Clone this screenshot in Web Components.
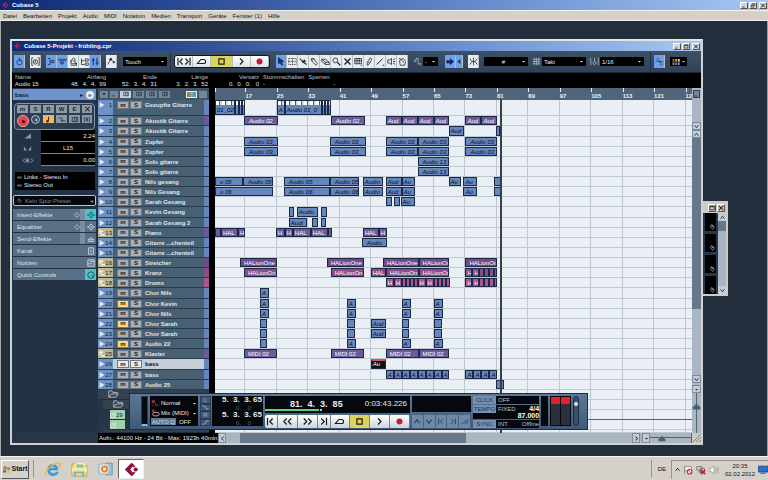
<!DOCTYPE html>
<html lang="de">
<head>
<meta charset="utf-8">
<title>Cubase 5</title>
<style>
html,body{margin:0;height:100%}
body{font:6px/8px "Liberation Sans",Arial,sans-serif;background:#222e3c;color:#111;overflow:hidden}
</style>
</head>
<body>
<cubase-desktop></cubase-desktop>
<script>
const RESET = `*{box-sizing:border-box}
:host{display:block;box-sizing:border-box;min-width:0}
button,select,input{font:inherit;color:inherit;margin:0;padding:0;border:0;background:none;border-radius:0;min-width:0}
button{display:flex;align-items:center;justify-content:center;white-space:nowrap}
select{appearance:none}
ul,dl,dd,dt{margin:0;padding:0;list-style:none}`;

function define(name, css, html) {
  customElements.define(name, class extends HTMLElement {
    connectedCallback() {
      if (this.shadowRoot) return;
      const root = this.attachShadow({mode: 'open'});
      const t = document.createElement('template');
      t.innerHTML = `<style>${RESET}${css}</style>` + (typeof html === 'function' ? html(this) : html);
      root.append(t.content.cloneNode(true));
    }
  });
}

/* Icons: [viewBox, body]; strokes use the current colour */
const ICONS = {
  logo: ['0 0 16 16', '<path d="M1 8 8 1l3 2-4 4v2l4 4-3 2z" fill="#c8204c" stroke="none"/><circle cx="12" cy="8" r="2.5" fill="#c8204c" stroke="none"/>'],
  min: ['0 0 8 8', '<path d="M1 6.5h4"/>'],
  max: ['0 0 8 8', '<path d="M1 1.5h6v5H1zM1 2.3h6"/>'],
  restore: ['0 0 8 8', '<path d="M3 3V1h4v3H5M1 3.5h4v3H1z"/>'],
  close: ['0 0 8 8', '<path d="M1 1l6 6M7 1 1 7" stroke-width="1.4"/>'],
  power: ['0 0 12 12', '<circle cx="6" cy="7" r="3.5"/><path d="M6 1v5"/>'],
  rec0: ['0 0 12 12', '<path d="M3 1H1v10h2M9 1h2v10H9"/><circle cx="6" cy="6.5" r="3"/><path d="M6 4.500V7H4.500"/>'],
  insp: ['0 0 12 12', '<path d="M1 2h3v8H1M7 4q3 0 3 2t-3 2zM5.500 4v4"/>'],
  info: ['0 0 12 12', '<path d="M0 3h12M1 5h10M4 7h4l-2 3zM3 7l2 3"/>'],
  over: ['0 0 12 12', '<path d="M2 11h8v-3H8V3L6 1 4 3v2H2v2h2M2 9h8M5 5h2"/>'],
  pool: ['0 0 12 12', '<path d="M2 2v8h4M2 5h4M7 2.500h4v3H7zM7 8h4v3H7z"/>'],
  mix: ['0 0 12 12', '<path d="M3 1v10M8 1v10M1 4h4M6 8h4" stroke-width="1.3"/>'],
  auto: ['0 0 12 12', '<path d="M1 10 5 3l3 3 3 1"/><circle cx="5" cy="3" r="1.300" fill="currentColor"/><circle cx="9" cy="7" r="1"/>'],
  locs: ['0 0 20 12', '<path d="M2 1v10M8 2 4.500 6 8 10M18 1v10M12 2l3.500 4L12 10" stroke-width="1.6"/>'],
  loop: ['0 0 16 12', '<path d="M4 9h7q3 0 3-3t-3-3H7L2 9h4" stroke-width="1.5"/>'],
  stop: ['0 0 12 12', '<path d="M2.500 2.500h7v7h-7z" stroke-width="1.6"/>'],
  play: ['0 0 12 12', '<path d="M4 2l4 4-4 4" stroke-width="1.6"/>'],
  rec: ['0 0 12 12', '<circle cx="6" cy="6" r="4" fill="#c41d2b" stroke="none"/>'],
  tostart: ['0 0 12 12', '<path d="M2 1v10M9 2 5 6l4 4" stroke-width="1.6"/>'],
  toend: ['0 0 12 12', '<path d="M10 1v10M3 2l4 4-4 4" stroke-width="1.6"/>'],
  rew: ['0 0 14 12', '<path d="M6 2 2 6l4 4M12 2 8 6l4 4" stroke-width="1.6"/>'],
  ffwd: ['0 0 14 12', '<path d="M2 2l4 4-4 4M8 2l4 4-4 4" stroke-width="1.6"/>'],
  arrow: ['0 0 12 12', '<path d="M2 1v8l2.500-2L6 11l1.500-1L6 6.500 9 6z" fill="currentColor"/><path d="M9 11h2"/>'],
  range: ['0 0 12 12', '<path d="M1 2h10v8H1zM6 2v8M1 6h10" stroke-dasharray="1.500 1"/>'],
  split: ['0 0 12 12', '<path d="M1 2l4 4 5 4M4 7l4-3M6 8l3-3" stroke-width="1.4"/>'],
  glue: ['0 0 12 12', '<path d="M2 2l3 0 5 7-2 2-6-6zM5 2 3 5"/>'],
  erase: ['0 0 12 12', '<path d="M1 3h5l5 4v3H6L1 6zM1 3l5 4h5M6 7v3"/>'],
  zoom: ['0 0 12 12', '<circle cx="4.500" cy="4.500" r="3.200"/><path d="M7 7l4 4" stroke-width="1.5"/>'],
  mute: ['0 0 12 12', '<path d="M2 2l8 8M10 2 2 10" stroke-width="1.700"/>'],
  warp: ['0 0 12 12', '<path d="M1 2h9v7H1zM4 2v7M7 2v7M1 5h9M9 11h2"/>'],
  draw: ['0 0 12 12', '<path d="M3 11V7l4-6 2 1.500L6 9zM4 7l2 1"/>'],
  line: ['0 0 12 12', '<path d="M1 10 9 2M9 11h2" stroke-width="1.300"/>'],
  speaker: ['0 0 12 12', '<path d="M1 4h2l3-2v8L3 8H1zM8 4l3-2M8 6h3M8 8l3 2"/>'],
  color: ['0 0 12 12', '<path d="M2 5l5-3 3 4-1 5H3zM1 2l4 1M5 5l3 2"/>'],
  jump: ['0 0 12 12', '<path d="M1 6h3V2h3v7h4M4 3 2 5M8 9l2 2"/>'],
  scroll: ['0 0 12 12', '<path d="M1 5h4v3H1zM6 2v8M6 3l4 3-4 4z" fill="currentColor"/>'],
  tri: ['0 0 6 12', '<path d="M4.500 3v6L1.500 6z" fill="currentColor"/>'],
  snap: ['0 0 12 12', '<path d="M1 2l3 4-3 4M11 2 8 6l3 4M6 1v10M4 6h4"/>'],
  hash: ['0 0 12 12', '<path d="M3 1v10M6 1v10M9 1v10M1 3h10M1 6h10M1 9h10"/>'],
  quant: ['0 0 12 12', '<path d="M1 1v10M11 1v10M6 1v5"/><circle cx="6" cy="8" r="2"/>'],
  zero: ['0 0 12 12', '<path d="M1 2l10 8M4 1l4 10M1 6h10" stroke-dasharray="2 1"/>'],
  pal: ['0 0 12 9', '<g stroke="none"><path fill="#c94b4b" d="M0 0h3v4H0z"/><path fill="#e2923f" d="M4 0h3v4H4z"/><path fill="#dccb4e" d="M8 0h3v4H8z"/><path fill="#5aa05a" d="M0 5h3v4H0z"/><path fill="#4f7fc4" d="M4 5h3v4H4z"/><path fill="#a66fc0" d="M8 5h3v4H8z"/></g>'],
  down: ['0 0 8 8', '<path d="M1.500 3h5L4 5.500z" fill="currentColor" stroke="none"/>'],
  wave: ['0 0 10 10', '<path d="M1 0l8 5-8 5z" fill="#dfe9f8" stroke="none"/>'],
  midi: ['0 0 10 10', '<path d="M0 2h7M0 5h5M3 8h7" stroke="#fff" stroke-width="2"/>'],
  folder: ['0 0 14 10', '<path d="M1 9V1h4l1 2h6v2M1 9l3-4h9l-3 4z"/>'],
  keys: ['0 0 10 10', '<path d="M1 1v8h8V1M4 1v5M7 1v5" stroke="#eef6ee"/>'],
  fader: ['0 0 12 10', '<path d="M0 9h11V1z" fill="#7f99ae" stroke="none"/>'],
  pan: ['0 0 12 10', '<path d="M0 2v7h5zM12 2v7H7z" fill="#7f99ae" stroke="none"/>'],
  delay: ['0 0 14 10', '<path d="M3 2 0 5l3 3M11 2l3 3-3 3M9 3H5v4h4M5 5h3" stroke="#9cb2c6" stroke-width="1.3"/>'],
  io: ['0 0 10 8', '<path d="M0 4h4M3 1l3 3-3 3M8 1v6"/>'],
  dia: ['0 0 10 10', '<path d="M5 1l4 4-4 4-4-4z"/>'],
  diaf: ['0 0 10 10', '<path d="M5 1l3 4-3 4-3-4zM0 5h2M8 5h2M5 4v2"/>'],
  send: ['0 0 10 10', '<path d="M1 8h8M2 6q3-5 6 0M1 6h8"/>'],
  chan: ['0 0 10 10', '<path d="M2 1h6v8H2zM5 3v4"/>'],
  note: ['0 0 10 10', '<path d="M1 1h8v8H1zM3 3h6M1 6h6"/>'],
  knob: ['0 0 10 10', '<circle cx="5" cy="5" r="4"/><path d="M5 5l3 3"/>'],
  clef: ['0 0 10 10', '<path d="M5 1v6" stroke-width="1.4"/><circle cx="3.500" cy="7.500" r="1.300" fill="currentColor"/>'],
  lane: ['0 0 10 10', '<path d="M0 3h5v4h5M3 7h3"/>'],
  lanes: ['0 0 10 10', '<path d="M1 2h8v6H1zM4 2v6M7 2v6"/>'],
  mono: ['0 0 10 10', '<path d="M2 1Q0 5 2 9M8 1q2 4 0 8M5 2v6M4 3v4M6 3v4"/>'],
  up: ['0 0 8 8', '<path d="M1 6l3-4 3 4" stroke-width="1.400"/>'],
  dn: ['0 0 8 8', '<path d="M1 2l3 4 3-4" stroke-width="1.400"/>'],
  lf: ['0 0 8 8', '<path d="M6 1 2 4l4 3" stroke-width="1.400"/>'],
  rt: ['0 0 8 8', '<path d="M2 1l4 3-4 3" stroke-width="1.400"/>'],
  curve: ['0 0 8 6', '<path d="M0 1h2q3 0 3 4h3"/>'],
  curve2: ['0 0 8 6', '<path d="M0 5h2q3 0 3-4h3"/>'],
  mixrec: ['0 0 12 10', '<circle cx="3" cy="3" r="2" fill="#c8323c" stroke="#7c1d24"/><path d="M6 5v3h5M3 7v2" stroke="#c8323c"/>'],
  mixloop: ['0 0 12 10', '<circle cx="3" cy="2" r="1.700" fill="#c8323c" stroke="none"/><ellipse cx="6.500" cy="6.500" rx="4.500" ry="2.500" stroke="#e0a0a0" stroke-width="1.300"/>'],
  edit: ['0 0 14 8', '<path d="M0 7h5l3-5M7 4h6M7 7h6M9 1h4"/>'],
  win: ['0 0 12 12', '<g stroke="none"><path fill="#e8542c" d="M1 2q2-1.500 4.500 0L5 6Q3 5 .5 6z"/><path fill="#5aa83c" d="M6.500 2.500q2 1 4.500 0l-.5 4q-2 1-4.500 0z"/><path fill="#3f74d4" d="M.3 7q2-1 4.500 0l-.5 4q-2-1-4.500 0z"/><path fill="#f2c22c" d="M5.800 7.500q2 1 4.500 0l-.5 4q-2 1-4.500 0z"/></g>'],
  ie: ['0 0 18 18', '<path d="M14.500 9.500H5.500q.3 4 4 4 2 0 3-1.500h2.500q-1.500 4-5.700 4Q3 16 3 9.500T9 3.500q5.500 0 5.500 6zM5.700 7.700h6Q11.300 5.500 8.800 5.500T5.700 7.700z" fill="#39a3df" stroke="#1f7dbd" stroke-width=".5"/><path d="M1 16Q-1 12 6 6T17 2q1 1-1 5" stroke="#f0b62f" stroke-width="1.500"/>'],
  files: ['0 0 18 18', '<path d="M1 3h6l1 2h9v11H1z" fill="#f3d777" stroke="#cfa53c"/><path d="M5 3h9v5H5z" fill="#8fc977" stroke="#fff"/><path d="M1 7h16v5H1z" fill="#f8e7a0" stroke="none"/><path d="M4 17v-5h9v5" stroke="#6db3da" stroke-width="2"/>'],
  wmp: ['0 0 18 18', '<path d="M9 2h8v14H9z" fill="#9bc4e6" stroke="#5b8dbb"/><path d="M1 3h12v12H1z" fill="#cfe2f2" stroke="#7fa9cc"/><circle cx="8" cy="9" r="5" fill="#ee8427" stroke="#fff"/><path d="M6.500 6.500v5l4-2.500z" fill="#fff" stroke="none"/>'],
  cub: ['0 0 18 18', '<path d="M1 9 9 1l3.500 2.500L8 8v2l4.500 4.500L9 17z" fill="#8c1538" stroke="none"/><path d="M11 4l2 2M11 14l2-2" stroke="#8c1538" stroke-width="2"/><circle cx="14" cy="9" r="2.500" fill="#8c1538" stroke="none"/>'],
  flag: ['0 0 12 12', '<path d="M2 1v10M2 2h8v5H2z" fill="#fff" stroke="#888"/><circle cx="8" cy="8" r="2.800" fill="#fff" stroke="#c8323c" stroke-width="1.300"/><path d="M6 6l4 4" stroke="#c8323c"/>'],
  net: ['0 0 12 12', '<path d="M1 2h6v4H1zM4 6v3h5M5 4h5v4H5z" fill="#ddd" stroke="#666"/><path d="M6 6l5 5M11 6l-5 5" stroke="#c8202c" stroke-width="2"/>'],
  vol: ['0 0 12 12', '<path d="M1 4h2l3-3v10L3 8H1z" fill="#fff" stroke="#999"/><path d="M8 3q2 3 0 6M10 2q3 4 0 8" stroke="#999"/>'],
  dtop: ['0 0 12 10', '<path d="M0 1h12v7H0z" fill="#2f6fc4" stroke="#1d4480"/><path d="M3 9.500h6" stroke="#1d4480"/>'],
  thumb: ['0 0 12 8', '<path d="M6 0l5 5v3H1V5z" fill="#4d6072" stroke="none"/>'],
  grip: ['0 0 9 9', '<path d="M1 9l8-8M4 9l5-5M7 9l2-2" stroke="#84898e"/>'],
  hist: ['0 0 10 10', '<path d="M5 1 2 4l4 5 3-4zM5 1v3h3"/>']
};
define('cb-icon', ':host{flex:none;width:9px;height:9px}svg{display:block;width:100%;height:100%;fill:none;stroke:currentColor}', el => {
  const [vb, body] = ICONS[el.getAttribute('name')];
  return `<svg viewBox="${vb}" aria-hidden="true">${body}</svg>`;
});
const ic = (n, w = 9, h = 9) => `<cb-icon name="${n}" style="width:${w}px;height:${h}px"></cb-icon>`;

/* Title bar with window buttons */
define('title-bar', `:host{display:flex;align-items:center;gap:3px;padding:0 1px 0 2px;color:#fff;font-weight:700;background:linear-gradient(90deg,#0f2a73,#2c4c96 25%,#6b8fd0 65%,#a5c8f2)}
span{flex:1;white-space:nowrap}div{display:flex;gap:1px}
button{width:8px;height:7px;background:#d8d4cc;color:#111;border:1px solid;border-color:#fff #555 #555 #fff}button:last-child{margin-left:1px}`,
  el => `${ic('logo', 7, 8)}<span><slot></slot></span><div><button aria-label="Minimieren">${ic('min', 6, 5)}</button><button aria-label="Fenstergröße">${ic(el.getAttribute('mid') || 'max', 6, 5)}</button><button aria-label="Schließen">${ic('close', 6, 5)}</button></div>`);

define('menu-bar', ':host{background:#d6d1c8;border-top:1px solid #f3f1ec;border-bottom:1px solid #efece6}nav{display:flex;height:100%;align-items:center;gap:6px;padding-left:3px}',
  '<nav>' + ['Datei', 'Bearbeiten', 'Projekt', 'Audio', 'MIDI', 'Notation', 'Medien', 'Transport', 'Geräte', 'Fenster (1)', 'Hilfe'].map(t => `<button>${t}</button>`).join('') + '</nav>');

/* Tool bar of the project window */
const tb = (n, c = '', w = 9) => `<button class="${c}" aria-label="${n}">${ic(n, w, 9)}</button>`;
const sel = (label, val, c) => `<span class="sel ${c}"><select aria-label="${label}"><option>${val}</option></select>${ic('down', 5, 5)}</span>`;
define('tool-bar', `:host{background:linear-gradient(#3d5166,#304257);display:flex;align-items:center;padding:0 2px;border-bottom:1px solid #1b2735}
.g{display:flex;height:13px;margin-right:5px;flex:none}
button{width:11px;background:#e9ecef;color:#1a1d22;border-right:1px solid #b4bcc6}
button.b{background:#6f9fec;color:#122a58}
.tr{height:13px;border:1px solid #10161d;border-radius:3px;overflow:hidden;margin-right:6px}.tr button{width:18px;background:linear-gradient(#fff,#dde1e6)}.tr .y{background:#dcd35c;width:22px}
.sel{display:flex;align-items:center;background:#000;color:#e6ebf0;height:9px;padding:0 2px;margin-right:4px;border-radius:1px}.sel select{flex:1;width:0;font-size:6px;line-height:8px}
.w1{width:44px;margin-left:1px;margin-right:3px}.w2{width:15px;margin-right:7px}.w3{width:44px}.w4{margin-right:6px}.c select{text-align:center;text-align-last:center}
.pale{color:#a9b8c8;margin-right:1px;flex:none}
i{width:1px;height:20px;background:#22303f;margin-right:3px}`,
  `<div class="g">${tb('power', 'b')}</div><div class="g">${tb('rec0')}</div><div class="g">${tb('insp', 'b')}${tb('info', 'b')}${tb('over')}${tb('pool')}${tb('mix', 'b')}</div><div class="g">${tb('auto')}</div>
${sel('Automationsmodus', 'Touch', 'w1')}<i></i><div class="g tr">${tb('locs', '', 16)}${tb('loop', '', 11)}${tb('stop', 'y')}${tb('play')}${tb('rec')}</div>
<div class="g">${tb('arrow', 'b')}${['range', 'split', 'glue', 'erase', 'zoom', 'mute', 'warp', 'draw', 'line', 'speaker', 'color'].map(n => tb(n)).join('')}</div>
<span class="pale">${ic('jump')}</span>${sel('Nudge', '-', 'w2')}<div class="g">${tb('scroll', 'b')}<button class="b" style="width:7px" aria-label="Autoscroll">${ic('tri', 4, 9)}</button></div><div class="g">${tb('snap')}</div>
${sel('Rastertyp', '#', 'w3 c')}<span class="pale">${ic('hash')}</span>${sel('Raster', 'Takt', 'w3')}<span class="pale">${ic('quant')}</span>${sel('Quantisierung', '1/16', 'w3 w4')}<i></i><div class="g">${tb('zero', 'b')}</div>
<button style="width:17px;height:9px;background:#000;color:#ccc;border:0" aria-label="Farben">${ic('pal', 9, 6)}${ic('down', 5, 5)}</button>`);

define('info-line', `:host{background:#000;color:#dfe5ea;padding:1px 3px 0}dl{display:flex}div{text-align:right;white-space:pre}div:first-child{text-align:left}dt,dd{line-height:7px}dt{color:#b9c2ca}
.a{width:36px}.b{width:55px}.c{width:51px}.l{text-align:left;margin-left:4px}`,
  '<dl>' + [['a', 'Name', 'Audio 15'], ['b', 'Anfang', '48.  4.  4.  99'], ['c', 'Ende', '52.  3.  4.  31'], ['c', 'Länge', '3.  2.  3.  52'], ['c', 'Versatz', '0.  0.  0.   0'], ['l', 'Stummschalten', '-'], ['l', 'Sperren', '               -']].map(([c, t, d]) => `<div class="${c}"><dt>${t}</dt><dd>${d}</dd></div>`).join('') + '</dl>');

/* Inspector */
define('inspector-panel', `:host{background:#233345;color:#d8e2ec;padding:1px 2px 0 1px;font-size:6px}
.h{display:flex;height:11px;align-items:center;background:#6f93cf;color:#0d1830;padding:0 2px}.h b{flex:1}.h button{width:8px;height:8px;border-radius:4px;background:#e8eef5;margin-left:3px;color:#222;line-height:6px}
.c{margin:3px 1px 0;border:1px solid #8096ab;border-radius:4px;padding:1px 2px;background:#2b3d50;display:grid;grid-template-columns:repeat(5,11px) 1fr;gap:2px;height:27px;grid-template-rows:8px 8px}
.c button{background:#8c9aa8;color:#1b232c;font-weight:700;height:8px;line-height:8px}.c .o{background:#f3b757}.c .rr{background:#e04450;border:1px solid #f2a0a4;border-radius:6px;width:12px;height:12px}.c .rr::after{content:"";width:3px;height:3px;background:#400;border-radius:2px}.c .mo{border-radius:5px;width:9px;height:9px;border:1px solid #b8c6d4;background:#3a4b5c;color:#dde;margin-left:1px}
.v{display:grid;grid-template-columns:27px 1fr;margin:0 1px;padding-bottom:6px}.v label{display:flex;align-items:center;justify-content:center;height:12px}.v input{background:#000;text-align:right;color:#e6edf3;height:12px;width:100%;border-bottom:1px solid #5d8fa0}.v .m{text-align:center}
.r{background:#000;margin:0 1px 5px 2px;padding:1px 2px}.r button{height:8px;gap:2px;color:#e2e8ee}
.p{display:flex;height:11px;width:100%;border:1px solid #b8c2cc;border-radius:2px;background:#05080c;color:#7d8a97;justify-content:flex-start;padding:0 2px;gap:3px;margin-bottom:3px}.p span{flex:1;text-align:left}
li{height:12px;padding-bottom:1px}li button{width:100%;height:11px;background:#596f85;padding-left:4px;justify-content:flex-start;gap:4px;color:#dce6ef}li:nth-child(-n+3) em{border-left:5px solid #7b8e9f}li span{flex:1;text-align:left}li em{display:flex;align-items:center;justify-content:center;width:11px;height:11px;box-sizing:content-box;margin-left:-4px}li .t{background:#4cc3cb;color:#13434a}`,
  `<div class="h"><b>bass</b>▸<button>e</button></div>
<div class="c"><button>m</button><button>S</button><button>R</button><button>W</button><button>E</button><button aria-label="Freeze">${ic('close', 7, 6)}</button><button class="rr" aria-label="Aufnahme"></button><button class="mo" aria-label="Monitor">${ic('tri', 4, 6)}</button><button class="o" aria-label="Zeitbasis">${ic('clef', 7, 7)}</button><button aria-label="Spuren">${ic('lane', 8, 7)}</button><button aria-label="Lanes">${ic('lanes', 8, 7)}</button><button aria-label="Stereo">${ic('mono', 8, 7)}</button></div>
<div class="v"><label for="vol">${ic('fader', 8, 6)}</label><input id="vol" aria-label="Lautstärke" value="2.24"><label for="pan">${ic('pan', 9, 6)}</label><input id="pan" class="m" aria-label="Panorama" value="L15"><label for="del">${ic('delay', 12, 7)}</label><input id="del" aria-label="Verzögerung" value="0.00"></div>
<div class="r"><button>${ic('io', 5, 5)}Links - Stereo In</button><button>${ic('io', 5, 5)}Stereo Out</button></div>
<button class="p">${ic('hist', 6, 6)}<span>Kein Spur-Preset</span>◂</button>
<ul>${[['Insert-Effekte', 'diaf', 1, 1], ['Equalizer', 'diaf', 0, 1], ['Send-Effekte', 'send'], ['Kanal', 'chan'], ['Notizen', 'note'], ['Quick Controls', 'knob', 1]].map(([t, n, on, d]) => `<li><button><span>${t}</span>${d ? ic('dia', 6, 6) : ''}<em class="${on ? 't' : ''}">${ic(n, 8, 8)}</em></button></li>`).join('')}</ul>`);

/* Track data: name, kind, colour, muted, clips [start, end, label, tone]; positions count from the left edge of a 478 unit view */
const B = '#6585bd', P = '#6a5c9c', V = '#704b8b', M = '#8c4c86', K = '#ae548c';
const A = (s, e, t = '', c = B) => [s - 215, e - 215, t, c];
const zup = () => [A(244, 278, 'Audio 03_'), A(330, 366, 'Audio 03_'), A(386, 418, 'Audio 03_'), A(418, 450, 'Audio 03_'), A(466, 498, 'Audio 03_')];
const run = (s, e, w, t, c) => { const r = []; for (let x = s; x < e; x += w) r.push(A(x, Math.min(e, x + w), t, c)); return r; };
const cols = (...xs) => xs.map(x => A(x, x + 9, 'A'));
const TRACKS = [
  ['Gezupfte Gitarre', 'a', B, 0, [A(215, 235, '01_02'), A(235, 239), A(239, 242), A(242, 245), A(277, 285, 'A'), A(285, 322, 'Audio 01_0'), A(322, 325), A(325, 328), A(328, 331)]],
  ['Akustik Gitarre', 'a', P, 0, [A(244, 278, 'Audio 02_', P), A(331, 365, 'Audio 02_', P), ...run(386, 450, 16, 'Aud', P), ...run(466, 498, 16, 'Aud', P)]],
  ['Akustik Gitarre', 'a', B, 0, [A(449, 465, 'Aud'), A(497, 501)]],
  ['Zupfer', 'a', B, 0, zup()],
  ['Zupfer', 'a', B, 0, zup()],
  ['Solo gitarre', 'a', B, 0, [A(418, 450, 'Audio 13_')]],
  ['Solo gitarre', 'a', B, 0, [A(418, 450, 'Audio 13_')]],
  ['Nils gesang', 'a', B, 0, [A(215, 243, 'o 05'), A(243, 273, 'Audio 05'), A(284, 330, 'Audio 05'), A(330, 359, 'Audio 05'), A(363, 383, 'Audio'), A(386, 402, 'Aud'), A(402, 415, 'Au'), A(449, 462, 'Au'), A(464, 478, 'Au'), A(495, 503)]],
  ['Nils Gesang', 'a', B, 0, [A(215, 273, 'o 06'), A(284, 330, 'Audio 06'), A(330, 359, 'Audio 06'), A(363, 383, 'Audio'), A(386, 402, 'Aud'), A(402, 415, 'Au'), A(464, 478, 'Au'), A(495, 503)]],
  ['Sarah Gesang', 'a', B, 0, [A(386, 392), A(394, 400), A(401, 415, 'Au')]],
  ['Kevin Gesang', 'a', B, 0, [A(289, 294), A(297, 318, 'Audio'), A(321, 327)]],
  ['Sarah Gesang 2', 'a', B, 0, [A(289, 307, 'Audi'), A(312, 318), A(321, 326)]],
  ['Piano', 'm', P, 0, [A(215, 221, '', P), A(221, 238, 'HAL', P), A(238, 245, 'H', P), A(276, 285, 'H', P), A(285, 293, 'H', P), A(293, 311, 'HAL', P), A(311, 328, 'HAL', P), A(328, 332, '', P), A(363, 379, 'HAL', P), A(379, 387, 'H', P)]],
  ['Gitarre ...chenteil', 'a', B, 0, [A(362, 387, 'Audio')]],
  ['Gitarre ...chenteil', 'a', B, 0, []],
  ['Streicher', 'm', V, 0, [A(240, 277, 'HALionOne', V), A(327, 364, 'HALionOne', V), A(383, 419, 'HALionOne', V), A(419, 450, 'HALionOn', V), A(466, 498, 'HALionOn', V)]],
  ['Kranz', 'm', M, 0, [A(244, 277, 'HALionOn', M), A(331, 364, 'HALionOn', M), A(371, 386, 'HAL', M), A(386, 419, 'HALionOn', M), A(419, 450, 'HALionOn', M), A(466, 473, 'H', M), A(473, 480, 'H', M), ...run(480, 498, 5, '', M)]],
  ['Drums', 'm', K, 0, [A(386, 394, 'H', K), A(394, 402, 'H', K), ...run(402, 418, 4, '', K), A(418, 426, 'H', K), A(426, 434, 'H', K), ...run(434, 450, 4, '', K), A(466, 473, 'H', K), A(473, 480, 'H', K), ...run(480, 498, 5, '', K)]],
  ['Chor Nils', 'a', B, 0, cols(260)],
  ['Chor Kevin', 'a', B, 1, cols(260, 347, 402, 434)],
  ['Chor Nils', 'a', B, 0, cols(260, 347, 402, 434)],
  ['Chor Sarah', 'a', B, 1, [A(260, 267), A(347, 355), A(371, 386, 'Aud'), A(402, 409), A(434, 442)]],
  ['Chor Sarah', 'a', B, 0, [A(260, 267), A(347, 355), A(371, 386, 'Aud'), A(402, 409), A(434, 442)]],
  ['Audio 22', 'a', B, 1, [A(260, 267), ...cols(347, 402, 434)]],
  ['Klavier', 'm', P, 0, [A(244, 277, 'MIDI 02', P), A(331, 364, 'MIDI 02', P), A(386, 419, 'MIDI 02', P), A(419, 450, 'MIDI 02', P)]],
  ['bass', 'a', B, 0, [A(371, 386, 'Au', '#111')], 1],
  ['bass', 'a', B, 0, [...run(386, 450, 8, 'A'), ...run(466, 498, 8, 'A')]],
  ['Audio 25', 'a', B, 0, [A(497, 505)]]
];
const ROWS = 'grid-template-rows:minmax(0,162fr) repeat(31,minmax(0,101fr)) minmax(0,27fr)';
const COLS = 'grid-template-columns:minmax(0,61fr) repeat(14,minmax(0,63fr)) minmax(0,13fr)';

define('track-row', `:host{display:flex;background:#486074;border-bottom:1px solid #2b3b4b;color:#dfe7ee;font-weight:700;overflow:hidden}
.n{width:15px;flex:none;display:flex;align-items:flex-start;justify-content:space-between;background:#6f92c4;color:#101c30;font-weight:400;padding:1px 1px 0;line-height:8px;margin-right:4px}
:host([kind=m]) .n{background:#bdb798}
.x{display:flex;gap:1px;flex:1;padding-top:1px}button{width:12px;height:8px;background:#a4afba;color:#10151b;line-height:7px;border:1px solid #6d7a87;font-weight:700}button.on{background:#f5dc80}
b{padding-left:2px;flex:1;white-space:nowrap}.k{width:5px;background:var(--k)}
:host([selected]) {background:#c6ced8;color:#111}:host([selected]) button{background:#e6ebf0}`,
  el => `<div class="n">${ic(el.getAttribute('kind') === 'm' ? 'midi' : 'wave', 6, 8)}<span>${el.getAttribute('num')}</span></div><div class="x"><button class="${el.hasAttribute('muted') ? 'on' : ''}">m</button><button>S</button><b>${el.getAttribute('label')}</b></div><div class="k"></div>`);

define('track-list', `:host{display:grid;grid-template-rows:12px minmax(0,1fr);background:#263647}
.top{display:flex;align-items:center;gap:2px;background:#42566a;padding:0 2px}.top button{width:8px;height:7px;background:#75869a;color:#1c2732}.top .w{width:11px;background:#c8d2dd}.top u{flex:1}.top .rgb{background:linear-gradient(90deg,#c66 33%,#6b8 33% 66%,#68d 66%);width:11px;border:1px solid #eee}
.rows{display:grid;${ROWS}}.f{display:flex;align-items:center;background:#34424f;color:#c6ced6;border-bottom:1px solid #222d38}.f1{padding-left:10px}.f2{margin-left:5px;padding-left:10px}.f3{margin:0 84px 0 12px;background:#9ecfae;color:#18301f}`,
  `<div class="top"><button aria-label="Liste">${ic('down', 6, 6)}</button><button aria-label="Reihe">${ic('min', 6, 6)}</button><button class="w" aria-label="Alle">${ic('lanes', 8, 6)}</button><button style="width:11px" aria-label="M">${ic('lanes', 8, 6)}</button><button style="width:11px" aria-label="S">${ic('lanes', 8, 6)}</button><button style="width:11px" aria-label="R">${ic('lanes', 8, 6)}</button><u></u><button class="rgb" aria-label="Farben"></button><button aria-label="Teilen"></button></div>
<div class="rows">${TRACKS.map((t, i) => `<track-row num="${i + 1}" label="${t[0]}" kind="${t[1]}" style="--k:${t[2]}" ${t[3] ? 'muted' : ''} ${t[5] ? 'selected' : ''}></track-row>`).join('')}<div class="f f1">${ic('folder', 11, 8)}</div><div class="f f2">${ic('folder', 11, 8)}</div><div class="f f3">${ic('keys', 6, 8)}29</div><div class="f f3">${ic('keys', 6, 8)}</div><div class="f f2"></div></div>`);

define('time-ruler', `:host{display:grid;${COLS};background:#50657a;color:#eef3f7;font-weight:700}
span{padding:4px 0 0;line-height:8px;background:linear-gradient(#e8eef4,#e8eef4) 0 0/1px 4px no-repeat}`,
  ['', 17, 25, 33, 41, 49, 57, 65, 73, 81, 89, 97, 105, 113, 121, 12].map(n => `<span>${n}</span>`).join(''));

define('lane-view', `:host{position:relative;display:grid;background:#eaeff5;overflow:hidden}
.grid,.lanes{grid-area:1/1;display:grid;min-height:0}.grid{${COLS}}.grid i{border-right:1px solid #bcc5ce}.grid i:last-child{border:0}.lanes{${ROWS}}
.lane{position:relative;border-bottom:1px solid #c0c8d0}.hl{border-bottom-color:#56606b}
.clip{position:absolute;top:0;bottom:0;left:calc(var(--s)/478*100%);width:calc((var(--e) - var(--s))/478*100%);background:var(--c);border:1px solid #1b2846;overflow:hidden;white-space:nowrap;color:#060c1c;font-style:italic;line-height:8px;padding-left:4px}
.clip.l{color:#fff}.clip.m{font-style:normal;padding-left:3px}.clip.n{padding-left:1px}.lane:first-child .clip{background:repeating-linear-gradient(90deg,#fff 0 3px,#555 3px 4px,#ddd 4px 6px) 0 0/100% 4px no-repeat,var(--c);padding-top:5px;padding-left:1px}
.hot{border-top:2px solid #c8566a}.clip.hot{line-height:7px}
.head{position:absolute;top:0;bottom:0;left:calc(286/478*100%);width:2px;background:#3a3f46}`,
  `<div class="grid">${'<i></i>'.repeat(16)}</div><div class="lanes">${TRACKS.map(t => `<div class="lane">${t[4].map(([s, e, l, c]) => `<span class="clip ${c === B ? '' : 'l'} ${t[1] === 'm' ? 'm' : ''} ${e - s < 22 ? 'n' : ''} ${t[5] ? 'hot' : ''}" style="--s:${s};--e:${e};--c:${c}">${l}</span>`).join('')}</div>`).join('')}<div class="lane"></div><div class="lane"></div><div class="lane hl"></div><div class="lane"></div><div class="lane"></div></div><div class="head"></div>`);

define('side-scroll', `:host{display:flex;flex-direction:column;background:#a9b5c2;color:#1c2733}button{height:8px;width:100%;background:#c3ccd6;border:1px solid #7c8996}
.t{background:#66788a}.top{height:8px;margin:2px 1px;border:1px solid #33424f;background:#75869a}`,
  `<button class="top" style="width:7px" aria-label="Optionen">${ic('min', 5, 5)}</button><div style="flex:22"></div><button aria-label="Ab">${ic('dn', 5, 5)}</button><button aria-label="Auf">${ic('up', 5, 5)}</button><div class="t" style="flex:171"></div><div style="flex:66"></div><button aria-label="Ab">${ic('dn', 5, 5)}</button><button aria-label="Zoom" style="margin-top:2px">${ic('down', 5, 5)}</button><div style="flex:40;display:flex;justify-content:center;background:linear-gradient(90deg,#a9b5c2 4px,#566 4px 5px,#a9b5c2 5px)"><cb-icon name="thumb" style="margin-top:10px;height:7px"></cb-icon></div>`);

define('status-row', `:host{display:grid;grid-template-columns:206px minmax(0,1fr);background:#263647}
p{margin:0 0 0 86px;background:#000;color:#e4e9ee;white-space:nowrap;line-height:10px;padding-left:1px}.s{display:flex;background:#a9b5c2;color:#1c2733}button{width:8px;background:#c3ccd6;border:1px solid #7c8996}.z{width:42px;display:flex;align-items:center;padding-left:8px;background:linear-gradient(#a9b5c2 4px,#566 4px 5px,#a9b5c2 5px);border-right:1px solid #566}.g{width:9px;background:#cfcac0;display:flex}`,
  `<p>Aufn.: 44100 Hz - 24 Bit - Max: 1923h 40min</p><div class="s"><button aria-label="Links">${ic('lf', 5, 5)}</button><div style="flex:14"></div><div style="flex:227;background:#66788a"></div><div style="flex:166"></div><button aria-label="Rechts">${ic('rt', 5, 5)}</button><button style="margin-left:2px" aria-label="Zoom">${ic('down', 5, 5)}</button><div class="z">${ic('thumb', 8, 7)}</div><div class="g">${ic('grip', 9, 9)}</div></div>`);

define('project-window', `:host{border:2px solid #cfd2d4;border-top-color:#e4e4e2;display:grid;grid-template-rows:10px 22px 15px minmax(0,1fr) 10px;background:#233345}
.body{display:grid;grid-template-columns:86px 111px 6px minmax(0,1fr) 9px}.body>*{min-height:0}.gap{background:#000}.view{display:grid;grid-template-rows:12px minmax(0,1fr)}`,
  `<title-bar>Cubase 5-Projekt - frühling.cpr</title-bar><tool-bar></tool-bar><info-line></info-line>
<div class="body"><inspector-panel></inspector-panel><track-list></track-list><div class="gap"></div><div class="view"><time-ruler></time-ruler><lane-view></lane-view></div><side-scroll></side-scroll></div><status-row></status-row>`);

/* Transport panel */
define('transport-panel', `:host{display:flex;gap:2px;padding:2px 8px 3px 11px;background:linear-gradient(#5d7897,#40597a);border:1px solid #1d2c40;color:#e4ebf2}
.k{background:#05080c}.vm{width:7px;border:1px solid #2a3c55;border-bottom:2px solid #5fc3f0}
.mode{width:48px;padding:2px 1px}.mode div{display:flex;align-items:center;height:10px;gap:1px}.mode select{flex:1;width:0}.mode .q{gap:3px;height:7px}.q button{background:#5f7794;color:#cfdcea;height:7px;padding:0 1px}
.lr{width:63px;display:grid;grid-template-columns:11px 1fr;grid-template-rows:repeat(4,minmax(0,1fr));gap:0 1px}.lr button{background:#3f5878;border:1px solid #2a3d58;color:#9fb4cc}.lr output{background:#05080c;text-align:right;font-weight:700;font-size:8px;padding-right:1px;line-height:8px;white-space:pre}.lr .d{color:#59626c;font-weight:400;font-size:6px;padding-right:12px}
.main{width:145px}.pos{height:17px;display:flex;align-items:center;padding:0 3px;font-weight:700;font-size:9px;white-space:pre;border-bottom:2px solid #05080c;background:linear-gradient(90deg,#5fd07a 54px,#05080c 54px 55px,#8fe09a 55px 57px,#05080c 57px) 0 100%/100% 2px no-repeat #05080c}.pos span{flex:1;text-align:center}.pos time{font-size:8px;font-weight:400}
.btns{display:flex;height:13px;margin-top:2px;border-radius:2px;overflow:hidden}.btns button{flex:19;background:linear-gradient(#fff,#ccd3db);color:#16191e;border-right:1px solid #77828e}.btns .s{flex:12}.btns .y{background:#dcd35c}
.mk{width:59px}.mk .k{height:16px;margin-bottom:3px}.mk div+div{display:flex;height:13px;background:#6e88a6;color:#2b3f58}.mk button{flex:1;border-right:1px solid #4a6282}
.ck{width:66px;display:grid;grid-template-rows:8px 14px 8px;gap:1px}.ck div{background:#05080c;display:grid;grid-template-columns:23px 1fr auto;gap:2px;color:#b8c4d0}.ck span{white-space:nowrap}.ck button{background:#7590b0;color:#1e3048;height:8px;line-height:8px}.ck strong{font-size:7px;line-height:7px;text-align:right;color:#fff}
.lev{width:7px}.rd{width:21px;display:flex;gap:1px;padding:1px;background:#05080c}.rd i{flex:1;background:linear-gradient(#e3202c 7px,#2a313c 7px)}.sl{width:6px;border:1px solid #1d2c40;border-radius:3px;background:#38506e}.sl::before{content:"";display:block;width:4px;height:4px;border-radius:2px;background:#dce6f0;margin-top:5px}`,
  `<div class="k vm"></div><div class="k mode"><div>${ic('mixrec', 9, 8)}<select aria-label="Aufnahmemodus"><option>Normal</option></select>${ic('down', 5, 5)}</div><div>${ic('mixloop', 9, 8)}<select aria-label="Cycle-Modus"><option>Mix (MIDI)</option></select>${ic('down', 5, 5)}</div><div class="q"><button>AUTO Q</button>OFF</div></div>
<div class="lr"><button>L</button><output>5.  3.  3. 65</output><button aria-label="Punch In">${ic('curve', 7, 5)}</button><output class="d">0.    0</output><button>R</button><output>5.  3.  3. 65</output><button aria-label="Punch Out">${ic('curve2', 7, 5)}</button><output class="d">0.    0</output></div>
<div class="main"><div class="pos"><span>81.  4.  3.  85</span><time>0:03:43.226</time></div><div class="btns">${[['tostart', 's'], ['rew'], ['ffwd'], ['toend', 's'], ['loop'], ['stop', 'y'], ['play'], ['rec']].map(([n, c]) => `<button class="${c || ''}" aria-label="${n}">${ic(n, n === 'rec' || n === 'stop' ? 9 : 11, 9)}</button>`).join('')}</div></div>
<div class="mk"><div class="k"></div><div>${['up', 'dn', 'tostart', 'toend', 'edit'].map(n => `<button aria-label="${n}">${ic(n, 8, 7)}</button>`).join('')}</div></div>
<div class="ck"><div><button>CLICK</button><span>OFF</span></div><div><button>TEMPO</button><span>FIXED</span><strong>4/4<br>87.000</strong></div><div><button>SYNC</button><span>INT.</span><span>Offline</span></div></div>
<div class="k lev"></div><div class="rd"><i></i><i></i></div><div class="sl"></div>`);

define('mixer-window', `:host{border:2px solid #cfccc5;background:#26384b;display:grid;grid-template-rows:10px minmax(0,1fr)}
.t{background:#cfccc5;display:flex;justify-content:flex-end;gap:1px;padding:1px}.t button{width:8px;height:8px;border:1px solid #555;border-color:#fff #555 #555 #fff;color:#111}
.b{display:flex;justify-content:flex-end;min-height:0}.l{width:13px;display:flex;flex-direction:column;gap:3px;padding-right:2px;overflow:hidden}.l div{height:18px;flex:none;background:#000;color:#c8d2dc;display:flex;align-items:flex-end;justify-content:flex-end;padding:1px}
.s{width:8px;background:#a9b5c2;display:flex;flex-direction:column;color:#1c2733}.s button{height:8px;background:#c3ccd6}.s i{height:10px;background:#66788a}`,
  `<div class="t"><button aria-label="Fenstergröße">${ic('max', 6, 6)}</button><button aria-label="Schließen">${ic('close', 6, 6)}</button></div><div class="b"><div class="l">${`<div>${ic('hist', 6, 6)}</div>`.repeat(4)}</div><div class="s"><button aria-label="Auf">${ic('up', 5, 5)}</button><i></i><u style="flex:1"></u><button aria-label="Ab">${ic('dn', 5, 5)}</button></div></div>`);

define('task-bar', `:host{display:flex;align-items:center;background:#d5d1c9;border-top:1px solid #f4f2ee;padding:1px 0 0 1px}
.st{width:28px;height:19px;gap:1px;border:1px solid;border-color:#fff #555 #555 #fff;font-weight:700;font-size:7px}
.sep{width:1px;height:18px;background:#98948c;margin:0 6px 0 4px}.q{width:26px;height:20px}.q.on{background:#fff;border:1px solid;border-color:#666 #eee #eee #666}.f{flex:1}
.tray{display:flex;align-items:center;gap:3px;height:19px;border-left:1px solid #98948c;border-top:1px solid #98948c;padding-left:3px}.cl{text-align:center;margin:0 0 0 3px}.lang{margin-right:5px}`,
  `<button class="st">${ic('win', 8, 9)}Start</button><i class="sep"></i><button class="q" aria-label="Internet Explorer">${ic('ie', 16, 17)}</button><button class="q" aria-label="Explorer">${ic('files', 17, 17)}</button><button class="q" aria-label="Media Player">${ic('wmp', 15, 16)}</button><button class="q on" aria-label="Cubase">${ic('cub', 15, 15)}</button><span class="f"></span><i class="sep"></i><button class="lang">DE</button><div class="tray"><button aria-label="Mehr">${ic('up', 5, 5)}</button>${ic('flag', 10, 10)}${ic('net', 10, 10)}${ic('vol', 10, 10)}<time class="cl">20:35<br>02.02.2012</time>${ic('dtop', 10, 9)}</div>`);

/* Windows lie freely on the desktop area */
define('cubase-desktop', `:host{display:grid;height:100vh;grid-template-rows:10px 11px minmax(0,1fr) 24px}
.area{position:relative;border-left:1px solid #a9aaa8;background:#222e3c;border-right:1px solid #99a}
project-window{position:absolute;left:9px;right:64px;top:18px;bottom:11px}
mixer-window{position:absolute;width:40px;right:39px;top:180px;height:95px}
transport-panel{position:absolute;left:128px;top:372px;height:37px}`,
  `<title-bar mid="restore">Cubase 5</title-bar><menu-bar></menu-bar><div class="area"><mixer-window></mixer-window><project-window></project-window><transport-panel></transport-panel></div><task-bar></task-bar>`);
</script>
</body>
</html>
